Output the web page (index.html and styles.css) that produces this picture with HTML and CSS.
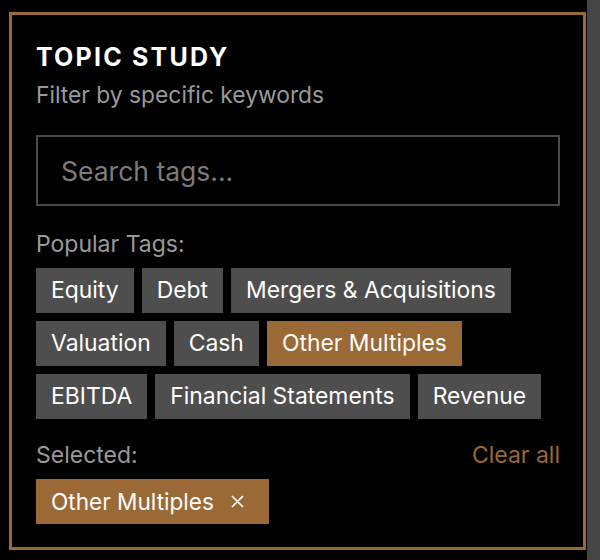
FILE: index.html
```html
<!DOCTYPE html>
<html>
<head>
<meta charset="utf-8">
<link rel="stylesheet" href="styles.css">
</head>
<body>
<div class="page">
  <section class="panel">
    <h2 class="title">TOPIC STUDY</h2>
    <p class="subtitle">Filter by specific keywords</p>
    <div class="search"><input class="search-input" type="text" placeholder="Search tags..."></div>
    <div class="label">Popular Tags:</div>
    <div class="tags">
      <span class="tag">Equity</span>
      <span class="tag">Debt</span>
      <span class="tag">Mergers &amp; Acquisitions</span>
      <span class="tag">Valuation</span>
      <span class="tag">Cash</span>
      <span class="tag tag-active">Other Multiples</span>
      <span class="tag">EBITDA</span>
      <span class="tag">Financial Statements</span>
      <span class="tag">Revenue</span>
    </div>
    <div class="selected-row">
      <span class="label-inline">Selected:</span>
      <span class="clear">Clear all</span>
    </div>
    <div class="chips">
      <span class="chip">Other Multiples<svg class="chip-x" width="13" height="13" viewBox="0 0 13 13"><path d="M1 1L12 12M12 1L1 12" stroke="#fff" stroke-width="1.7" fill="none"/></svg></span>
    </div>
  </section>
</div>
</body>
</html>
```
FILE: styles.css
```css
html, body {
  margin: 0;
  padding: 0;
  background: #454545;
}
body {
  font-family: Inter, "Noto Sans", sans-serif;
  width: 600px;
  height: 560px;
  overflow: hidden;
}
.page {
  width: 587px;
  height: 560px;
  background: #000;
  box-sizing: border-box;
  padding: 12px 1px 0 9px;
}
.panel {
  width: 577px;
  height: 538px;
  box-sizing: border-box;
  border: 3px solid #9b6935;
  padding: 27px 23px 0 24px;
}
.title {
  margin: 0;
  font-size: 25px;
  font-weight: 700;
  letter-spacing: 2.2px;
  color: #fff;
  line-height: 30px;
}
.subtitle {
  margin: 9px 0 0;
  font-size: 22.8px;
  line-height: 28px;
  color: #9a9a9a;
}
.search {
  margin-top: 26px;
}
.search-input {
  display: block;
  width: 100%;
  height: 71px;
  box-sizing: border-box;
  background: #000;
  border: 2px solid #4a4a4a;
  padding: 0 23px;
  font-family: Inter, "Noto Sans", sans-serif;
  font-size: 26.5px;
  color: #fff;
  outline: none;
}
.search-input::placeholder {
  color: #7c7c7c;
}
.label {
  margin-top: 24px;
  font-size: 23px;
  line-height: 28px;
  color: #9a9a9a;
}
.tags {
  display: flex;
  flex-wrap: wrap;
  gap: 8px 8px;
  margin-top: 10px;
}
.tag {
  height: 45px;
  line-height: 45px;
  padding: 0 15px;
  background: #4e4e4e;
  color: #fff;
  font-size: 22.9px;
}
.tag-active {
  background: #9b6935;
}
.selected-row {
  display: flex;
  justify-content: space-between;
  margin-top: 22px;
  font-size: 23px;
  line-height: 28px;
}
.label-inline {
  color: #9a9a9a;
}
.clear {
  color: #9b6935;
}
.chips {
  margin-top: 10px;
  display: flex;
}
.chip {
  display: flex;
  align-items: center;
  height: 45px;
  padding: 0 25px 0 15px;
  background: #9b6935;
  color: #fff;
  font-size: 22.6px;
}
.chip-x {
  margin-left: 17px;
}
```
